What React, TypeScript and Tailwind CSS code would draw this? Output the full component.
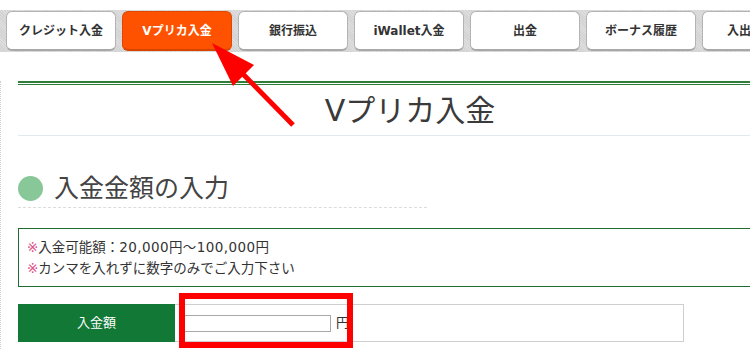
import React from "react";

const tabs = [
  "クレジット入金",
  "Vプリカ入金",
  "銀行振込",
  "iWallet入金",
  "出金",
  "ボーナス履歴",
  "入出金履歴",
];

function TabBar() {
  return (
    <div className="mt-[10px] flex gap-[6px] px-[6px] py-[1px] bg-[repeating-linear-gradient(45deg,#d2d2d2_0,#d2d2d2_1px,#dedede_1px,#dedede_2px)]">
      {tabs.map((t, i) => {
        const active = i === 1;
        return (
          <div
            key={t}
            className={
              active
                ? "shrink-0 w-[110px] h-[40px] flex items-center justify-center rounded-[6px] border border-[#e04800] border-b-2 border-b-[#d84500] bg-[#ff5200] text-white text-[12px] font-bold"
                : "shrink-0 w-[110px] h-[40px] flex items-center justify-center rounded-[6px] border border-[#b4b4b4] border-b-2 border-b-[#a8a8a8] bg-white text-[#333] text-[12px] font-bold"
            }
          >
            {t}
          </div>
        );
      })}
    </div>
  );
}

export default function App() {
  return (
    <div className="relative w-[750px] h-[350px] overflow-hidden bg-white font-['DejaVu_Sans','Noto_Sans_CJK_JP',sans-serif]">
      <TabBar />

      <div className="border-l border-dotted border-[#cfcfcf] pl-[17px] h-[400px]">
        <div className="w-[784px]">
          {/* double green rule */}
          <div className="mt-[29px] h-[2px] bg-[#2e7d38]" />
          <div className="mt-px h-px bg-[#2e7d38]" />

          <h1 className="h-[51px] flex items-center justify-center border-b border-[#e3eaed] text-[30px] font-normal text-[#3a3a3a]">
            Vプリカ入金
          </h1>

          {/* section heading */}
          <div className="mt-[33px] w-[409px] h-[39px] flex items-center gap-[11px] border-b border-dashed border-[#dcdcdc]">
            <span className="w-[25px] h-[25px] rounded-full bg-[#88c797]" />
            <span className="text-[25px] text-[#444] leading-none">入金金額の入力</span>
          </div>

          {/* notice box */}
          <div className="mt-[20px] border border-[#1f6b32] pt-[8px] pb-[7px] pl-[8px] text-[13.5px] leading-[21px] text-[#333]">
            <p>
              <span className="text-[#e0508a]">※</span>入金可能額：
              <span className="tracking-[0.4px]">20,000円～100,000円</span>
            </p>
            <p>
              <span className="text-[#e0508a]">※</span>カンマを入れずに数字のみでご入力下さい
            </p>
          </div>

          {/* amount row */}
          <div className="mt-[17px] w-[666px] h-[38px] flex border border-[#cfcfcf]">
            <div className="w-[157px] -ml-px -my-px flex items-center justify-center bg-[#127836] text-white text-[13px]">
              入金額
            </div>
            <div className="flex items-center pl-[9px]">
              <input
                type="text"
                className="w-[147px] h-[17px] border border-[#a9a9a9] bg-white outline-none"
              />
              <span className="ml-[5px] text-[13px] text-[#333]">円</span>
            </div>
          </div>
        </div>
      </div>

      {/* red annotation box */}
      <div className="absolute left-[179px] top-[293px] w-[174px] h-[55px] border-[6px] border-[#ff0000]" />

      {/* red annotation arrow */}
      <svg className="absolute left-0 top-0" width="750" height="350" viewBox="0 0 750 350">
        <line x1="293" y1="125" x2="240" y2="71" stroke="#ff0000" strokeWidth="5" />
        <polygon points="212,43 254,65 233,86" fill="#ff0000" />
      </svg>
    </div>
  );
}
